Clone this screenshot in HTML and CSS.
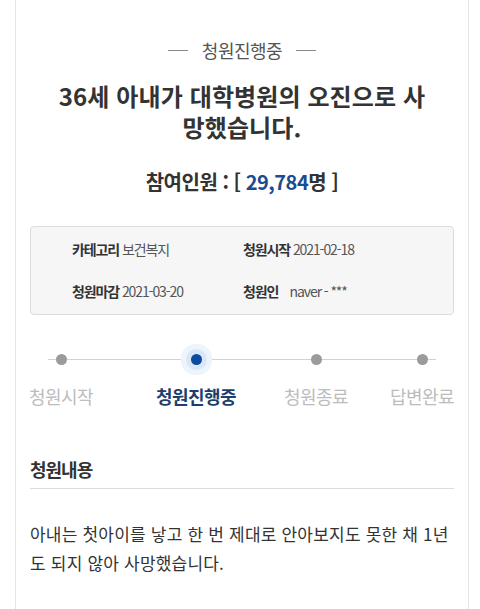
FILE: index.html
```html
<!DOCTYPE html>
<html lang="ko">
<head>
  <meta charset="UTF-8">
  <title>청원진행중</title>
  <link rel="stylesheet" href="styles.css">
</head>
<body>

  <div class="card">
    <p class="status"><span class="dash"></span>청원진행중<span class="dash"></span></p>
    <h1 class="title">36세 아내가 대학병원의 오진으로 사망했습니다.</h1>
    <p class="count">참여인원 : [ <span class="num">29,784</span>명 ]</p>

    <div class="info">
      <div class="info-item"><b>카테고리</b> 보건복지</div>
      <div class="info-item"><b>청원시작</b> 2021-02-18</div>
      <div class="info-item"><b>청원마감</b> 2021-03-20</div>
      <div class="info-item"><b>청원인</b>&nbsp;&nbsp;&nbsp; naver - ***</div>
    </div>

    <div class="steps">
      <div class="step"><span class="dot"></span><span class="label">청원시작</span></div>
      <div class="step on"><span class="dot"></span><span class="label">청원진행중</span></div>
      <div class="step"><span class="dot"></span><span class="label">청원종료</span></div>
      <div class="step"><span class="dot"></span><span class="label">답변완료</span></div>
    </div>

    <h2 class="section">청원내용</h2>
    <p class="content">아내는 첫아이를 낳고 한 번 제대로 안아보지도 못한 채 1년도 되지 않아 사망했습니다.</p>
  </div>

</body>
</html>
```

FILE: styles.css
```css
body { margin: 0; background: #fff; font-family: "Noto Sans CJK KR", "Noto Sans", sans-serif; color: #333; }
p, h1, h2 { margin: 0; }

.card { margin: 0 11px 0 15px; min-height: 609px; box-sizing: border-box; border-left: 1px solid #e3e3e3; border-right: 1px solid #e3e3e3; padding: 37px 14px 0; }

.status { display: flex; justify-content: center; align-items: center; gap: 14px; font-size: 18px; line-height: 26px; color: #555; letter-spacing: -0.5px; }
.dash { width: 20px; height: 1px; background: #888; }

.title { margin-top: 17px; padding: 0 26px; text-align: center; word-break: break-all; font-size: 24px; line-height: 31px; font-weight: bold; letter-spacing: 0.1px; color: #333; }

.count { margin-top: 26px; text-align: center; font-size: 20px; line-height: 28px; font-weight: bold; letter-spacing: -0.5px; }
.count .num { color: #1b4c8f; }

.info { margin-top: 30px; display: grid; grid-template-columns: 171px 1fr; row-gap: 22px; padding: 12px 0 13px 41px; background: #f6f6f6; border: 1px solid #dcdcdc; border-radius: 4px; font-size: 14px; line-height: 20px; letter-spacing: -1.1px; color: #555; }
.info b { color: #333; }

.steps { position: relative; display: flex; margin-top: 29px; }
.steps::before { content: ""; position: absolute; left: 18px; right: 18px; top: 15px; height: 1px; background: #d2d2d2; }
.step { position: relative; width: 62px; display: flex; flex-direction: column; align-items: center; }
.step:nth-child(2) { margin-left: 73px; }
.step:nth-child(3) { margin-left: 58px; }
.step:nth-child(4) { margin-left: 44px; }
.dot { width: 11px; height: 11px; margin: 10px 0 19px; border-radius: 50%; background: #9b9b9b; }
.step.on .dot { background: #0b4c9e; box-shadow: 0 0 0 5px #d9e7f7, 0 0 0 10px #eef4fb; }
.label { white-space: nowrap; font-size: 18px; line-height: 24px; color: #bcbcbc; letter-spacing: -0.6px; }
.step.on .label { color: #1d3f6e; font-weight: bold; }

.section { margin-top: 48px; padding-bottom: 6px; border-bottom: 1px solid #dcdcdc; font-size: 18px; line-height: 26px; letter-spacing: -1px; color: #333; }

.content { margin-top: 30px; word-break: break-all; font-size: 17px; line-height: 29px; color: #333; letter-spacing: 0.2px; }
```
